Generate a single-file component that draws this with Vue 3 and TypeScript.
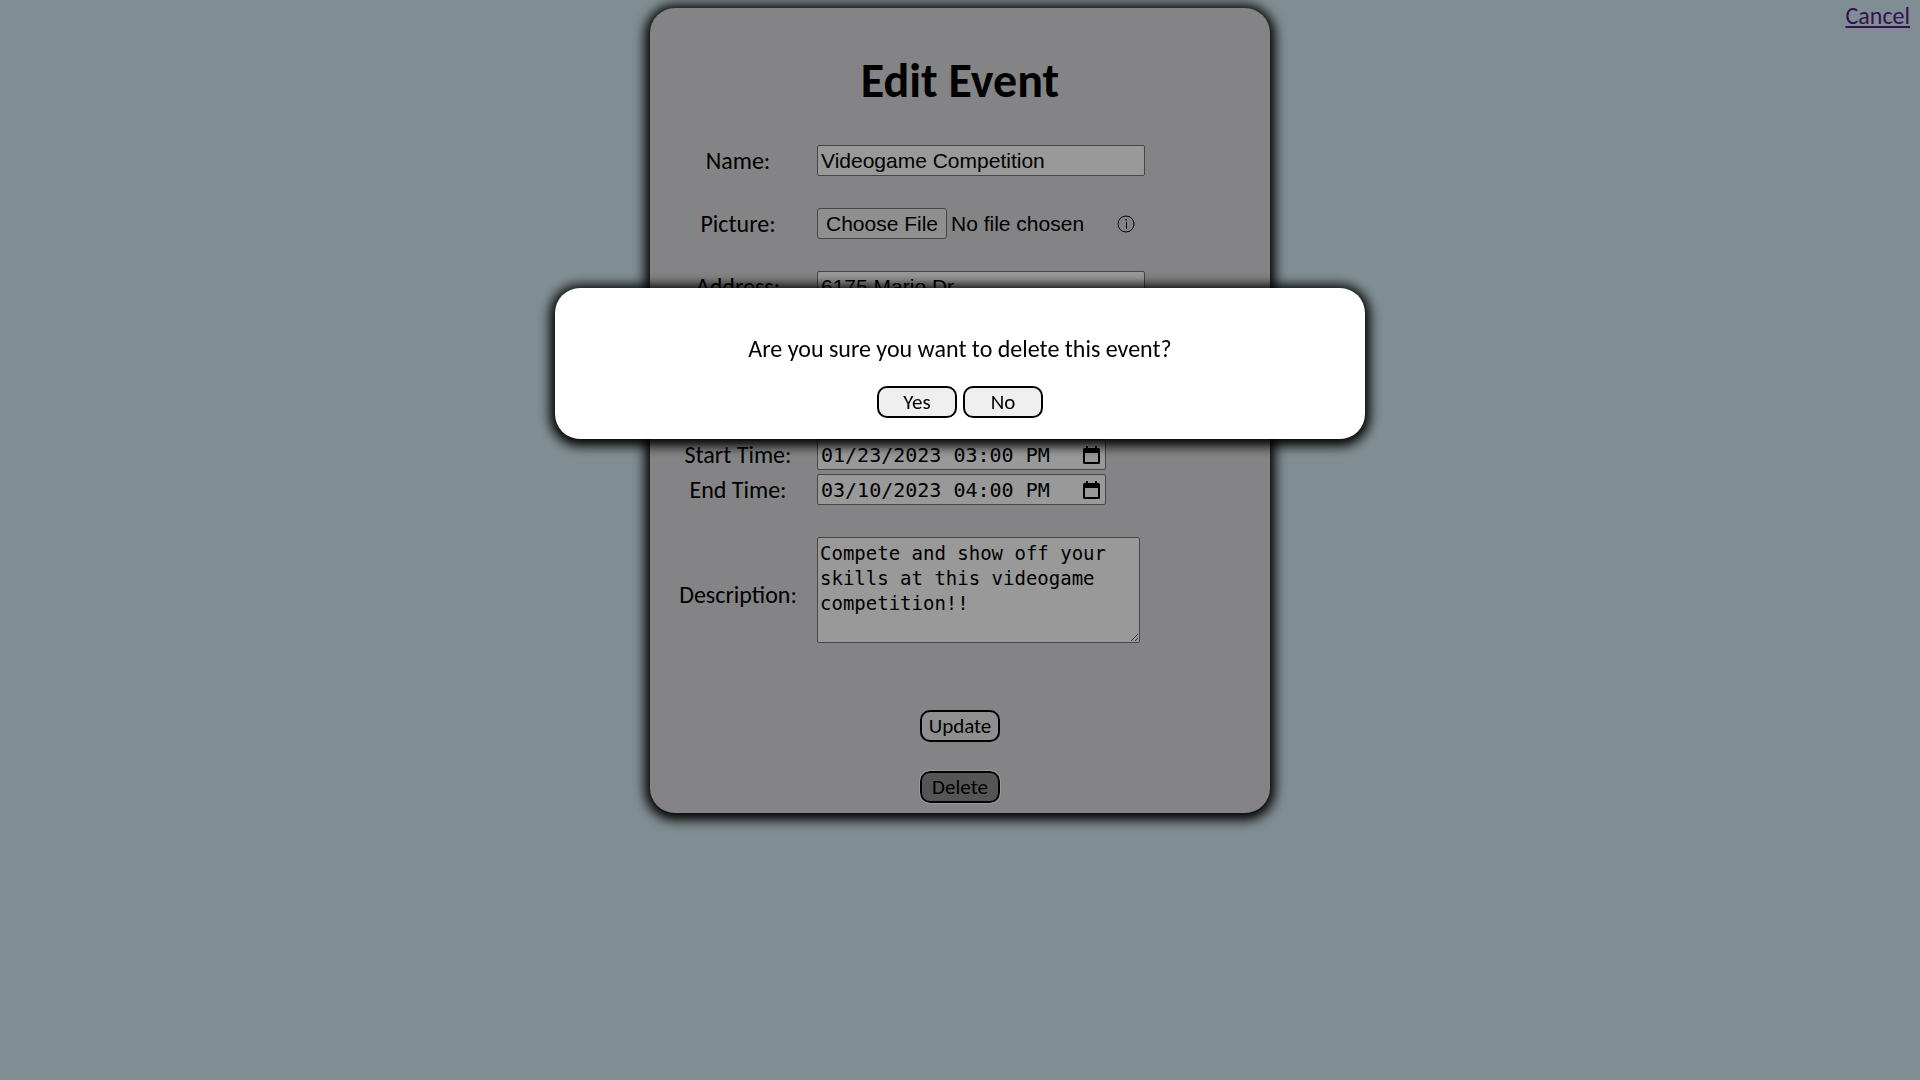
<script setup lang="ts">
import { ref } from 'vue'

const name = ref('Videogame Competition')
const address = ref('6175 Mario Dr')
const city = ref('')
const zip = ref('')
const startTime = ref('01/23/2023 03:00 PM')
const endTime = ref('03/10/2023 04:00 PM')
const description = ref('Compete and show off your skills at this videogame competition!!')
const confirming = ref(true)
</script>

<template>
  <div class="page">
    <a class="cancel" href="#">Cancel</a>
    <form class="card" @submit.prevent>
      <h1>Edit Event</h1>
      <div class="fields">
        <div class="row">
          <label for="name">Name:</label>
          <input id="name" v-model="name" class="text" type="text" />
        </div>
        <div class="row">
          <label for="picture">Picture:</label>
          <input id="picture" class="file" type="file" />
          <svg class="info" viewBox="0 0 18 18" aria-hidden="true">
            <circle cx="9" cy="9" r="8" fill="none" stroke="#000" stroke-width="1" />
            <path d="M8.5 4h1.5v1.500h-1.500z" fill="#000" />
            <path d="M9.500 7v7" stroke="#000" stroke-width="1" />
          </svg>
        </div>
        <div class="row">
          <label for="address">Address:</label>
          <input id="address" v-model="address" class="text" type="text" />
        </div>
        <div class="place">
          <div class="row">
            <label for="city">City:</label>
            <input id="city" v-model="city" class="text" type="text" />
          </div>
          <div class="row">
            <label for="zip">Zip:</label>
            <input id="zip" v-model="zip" class="text" type="text" />
          </div>
        </div>
        <div class="times">
          <div class="row">
            <label for="start">Start Time:</label>
            <div class="time">
              <input id="start" v-model="startTime" type="text" />
              <button class="picker" type="button" aria-label="Pick start time">
                <svg viewBox="0 0 17 18" aria-hidden="true">
                  <path d="M3 0h2v2h7V0h2v2h1.500q1.500 0 1.500 1.500v13q0 1.500-1.500 1.500h-14Q0 18 0 16.500v-13Q0 2 1.500 2H3zM2 7v9h13V7z" fill="#000" fill-rule="evenodd" />
                </svg>
              </button>
            </div>
          </div>
          <div class="row">
            <label for="end">End Time:</label>
            <div class="time">
              <input id="end" v-model="endTime" type="text" />
              <button class="picker" type="button" aria-label="Pick end time">
                <svg viewBox="0 0 17 18" aria-hidden="true">
                  <path d="M3 0h2v2h7V0h2v2h1.500q1.500 0 1.500 1.500v13q0 1.500-1.500 1.500h-14Q0 18 0 16.500v-13Q0 2 1.500 2H3zM2 7v9h13V7z" fill="#000" fill-rule="evenodd" />
                </svg>
              </button>
            </div>
          </div>
        </div>
        <div class="row">
          <label class="low" for="description">Description:</label>
          <textarea id="description" v-model="description"></textarea>
        </div>
      </div>
      <div class="actions">
        <button class="btn" type="submit">Update</button>
        <button class="btn danger" type="button" @click="confirming = true">Delete</button>
      </div>
    </form>
    <div v-if="confirming" class="overlay">
      <div class="dialog" role="dialog" aria-modal="true" aria-labelledby="question">
        <p id="question">Are you sure you want to delete this event?</p>
        <div class="choices">
          <button class="btn" type="button">Yes</button>
          <button class="btn" type="button" @click="confirming = false">No</button>
        </div>
      </div>
    </div>
  </div>
</template>

<style>
body {
  background: #d5ebf3;
}
</style>

<style scoped>
.page {
  min-height: 100vh;
  box-sizing: border-box;
  padding: 8px;
  font-family: Calibri, Carlito, Lato, sans-serif;
  font-size: 24px;
  line-height: 29px;
  color: #000;
}
.cancel {
  position: absolute;
  top: 1px;
  right: 10px;
  color: #551a8b;
}
.card {
  box-sizing: border-box;
  max-width: 620px;
  margin: 0 auto;
  padding: 49px 20px 10px;
  border-radius: 25px;
  background: #dcdcdf;
  box-shadow: 0 2px 12px 5px #000;
}
h1 {
  margin: 0 0 40px;
  font-size: 48px;
  line-height: 48px;
  text-align: center;
}
.fields {
  display: flex;
  flex-direction: column;
  gap: 32px;
}
.place {
  display: flex;
  flex-direction: column;
  gap: 11px;
}
.times {
  display: flex;
  flex-direction: column;
  gap: 4px;
}
.row {
  display: flex;
  align-items: center;
}
.row label {
  width: 136px;
  margin-right: 11px;
  text-align: center;
}
.row .low {
  padding-top: 8px;
}
input,
textarea {
  box-sizing: border-box;
  margin: 0;
  color: #000;
}
.text,
.time {
  box-sizing: border-box;
  height: 31px;
  padding: 1px 3px;
  border: 1px solid #767676;
  border-radius: 2px;
  background: #fff;
}
.text,
.file {
  font: 21px "Liberation Sans", Arial, sans-serif;
}
.text {
  width: 328px;
}
.file {
  width: 288px;
  height: 31px;
}
.file::file-selector-button {
  box-sizing: border-box;
  width: 130px;
  height: 31px;
  padding: 0;
  border: 1px solid #767676;
  border-radius: 3px;
  background: #efefef;
  color: #000;
}
.info {
  width: 18px;
  height: 18px;
  margin-left: 12px;
}
.time {
  display: flex;
  align-items: center;
  width: 289px;
}
.time input {
  flex: 1;
  min-width: 0;
  padding: 0;
  border: 0;
  background: none;
  font: 20px "DejaVu Sans Mono", monospace;
}
.picker {
  display: flex;
  padding: 0;
  margin-right: 2px;
  border: 0;
  background: none;
}
.picker svg {
  width: 17px;
  height: 18px;
}
textarea {
  width: 323px;
  height: 106px;
  padding: 3px 2px;
  border: 1px solid #767676;
  border-radius: 2px;
  background: #fff;
  font: 19px/25px "DejaVu Sans Mono", monospace;
}
.actions {
  display: flex;
  flex-direction: column;
  align-items: center;
  gap: 29px;
  margin-top: 67px;
}
.btn {
  box-sizing: border-box;
  width: 80px;
  height: 32px;
  padding: 0;
  border: 2px solid #000;
  border-radius: 10px;
  background: #efefef;
  color: #000;
  font: 21px Calibri, Carlito, Lato, sans-serif;
}
.danger {
  background: #8e8e8e;
  outline: 1px solid #fff;
}
.overlay {
  position: fixed;
  inset: 0;
  background: rgba(0, 0, 0, 0.4);
}
.dialog {
  box-sizing: border-box;
  max-width: 810px;
  margin: 288px auto 0;
  padding: 46px 20px 21px;
  border-radius: 25px;
  background: #fff;
  box-shadow: 0 2px 12px 5px #000;
  text-align: center;
}
.dialog p {
  margin: 0 0 23px;
}
.choices {
  display: flex;
  justify-content: center;
  gap: 6px;
}
</style>
